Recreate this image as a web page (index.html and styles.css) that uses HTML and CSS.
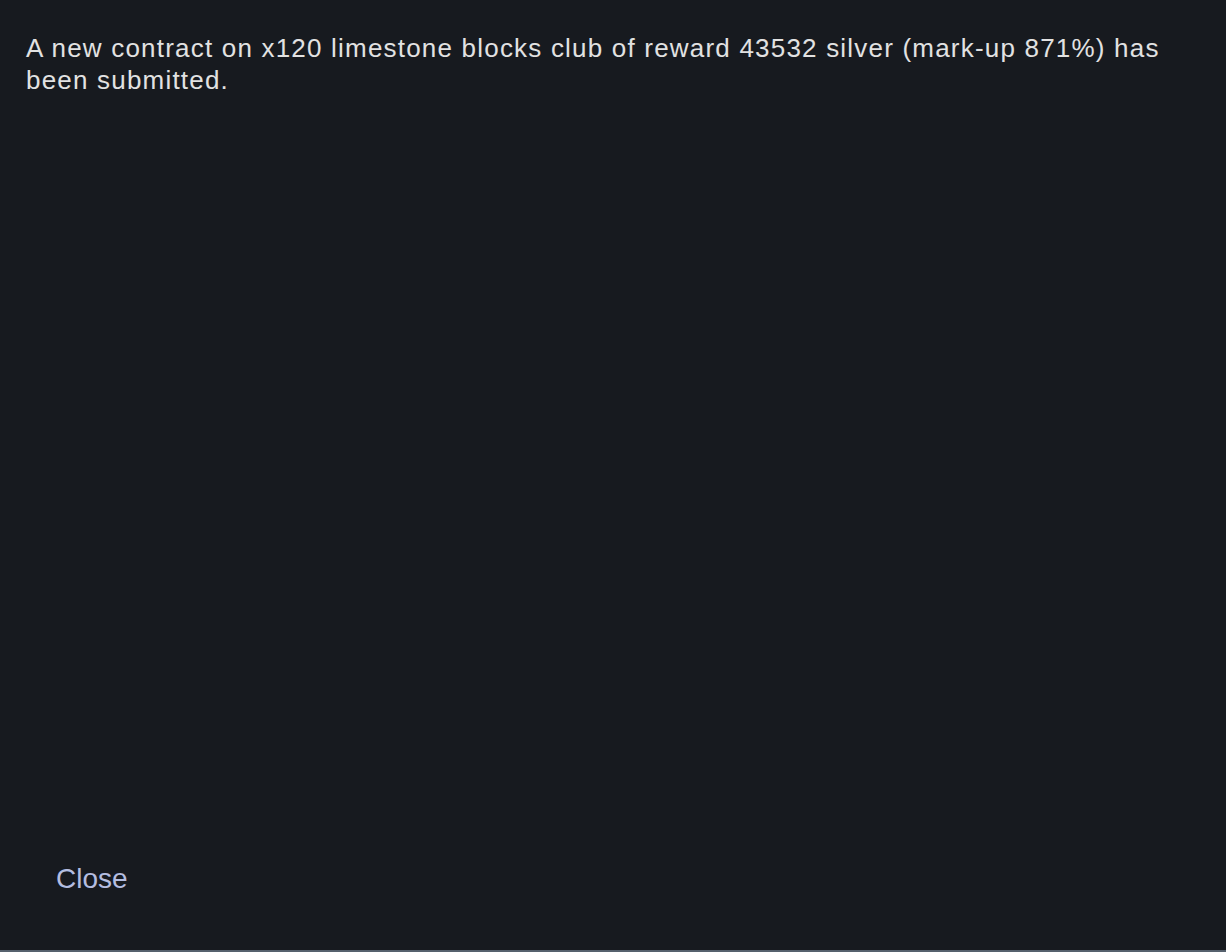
FILE: index.html
```html
<!DOCTYPE html>
<html>
<head>
<meta charset="utf-8">
<link rel="stylesheet" href="styles.css">
</head>
<body>
<div class="dialog">
  <p class="message">A new contract on x120 limestone blocks club of reward 43532 silver (mark-up 871%) has been submitted.</p>
  <div class="actions">
    <button class="close-btn">Close</button>
  </div>
</div>
</body>
</html>
```
FILE: styles.css
```css
html, body {
  margin: 0;
  padding: 0;
  height: 100%;
  background: #171a1f;
}
.dialog {
  box-sizing: border-box;
  height: 952px;
  display: flex;
  flex-direction: column;
  justify-content: space-between;
  border-bottom: 2px solid #56616d;
  font-family: "Liberation Sans", Arial, sans-serif;
}
.message {
  margin: 0;
  padding: 32px 26px 0 26px;
  color: #e2e2e2;
  font-size: 26px;
  letter-spacing: 1.2px;
  line-height: 32px;
}
.actions {
  padding: 0 0 55px 56px;
}
.close-btn {
  background: none;
  border: none;
  padding: 0;
  color: #b4bde0;
  font-family: "Liberation Sans", Arial, sans-serif;
  font-size: 28px;
  line-height: 32px;
  cursor: pointer;
}
```
